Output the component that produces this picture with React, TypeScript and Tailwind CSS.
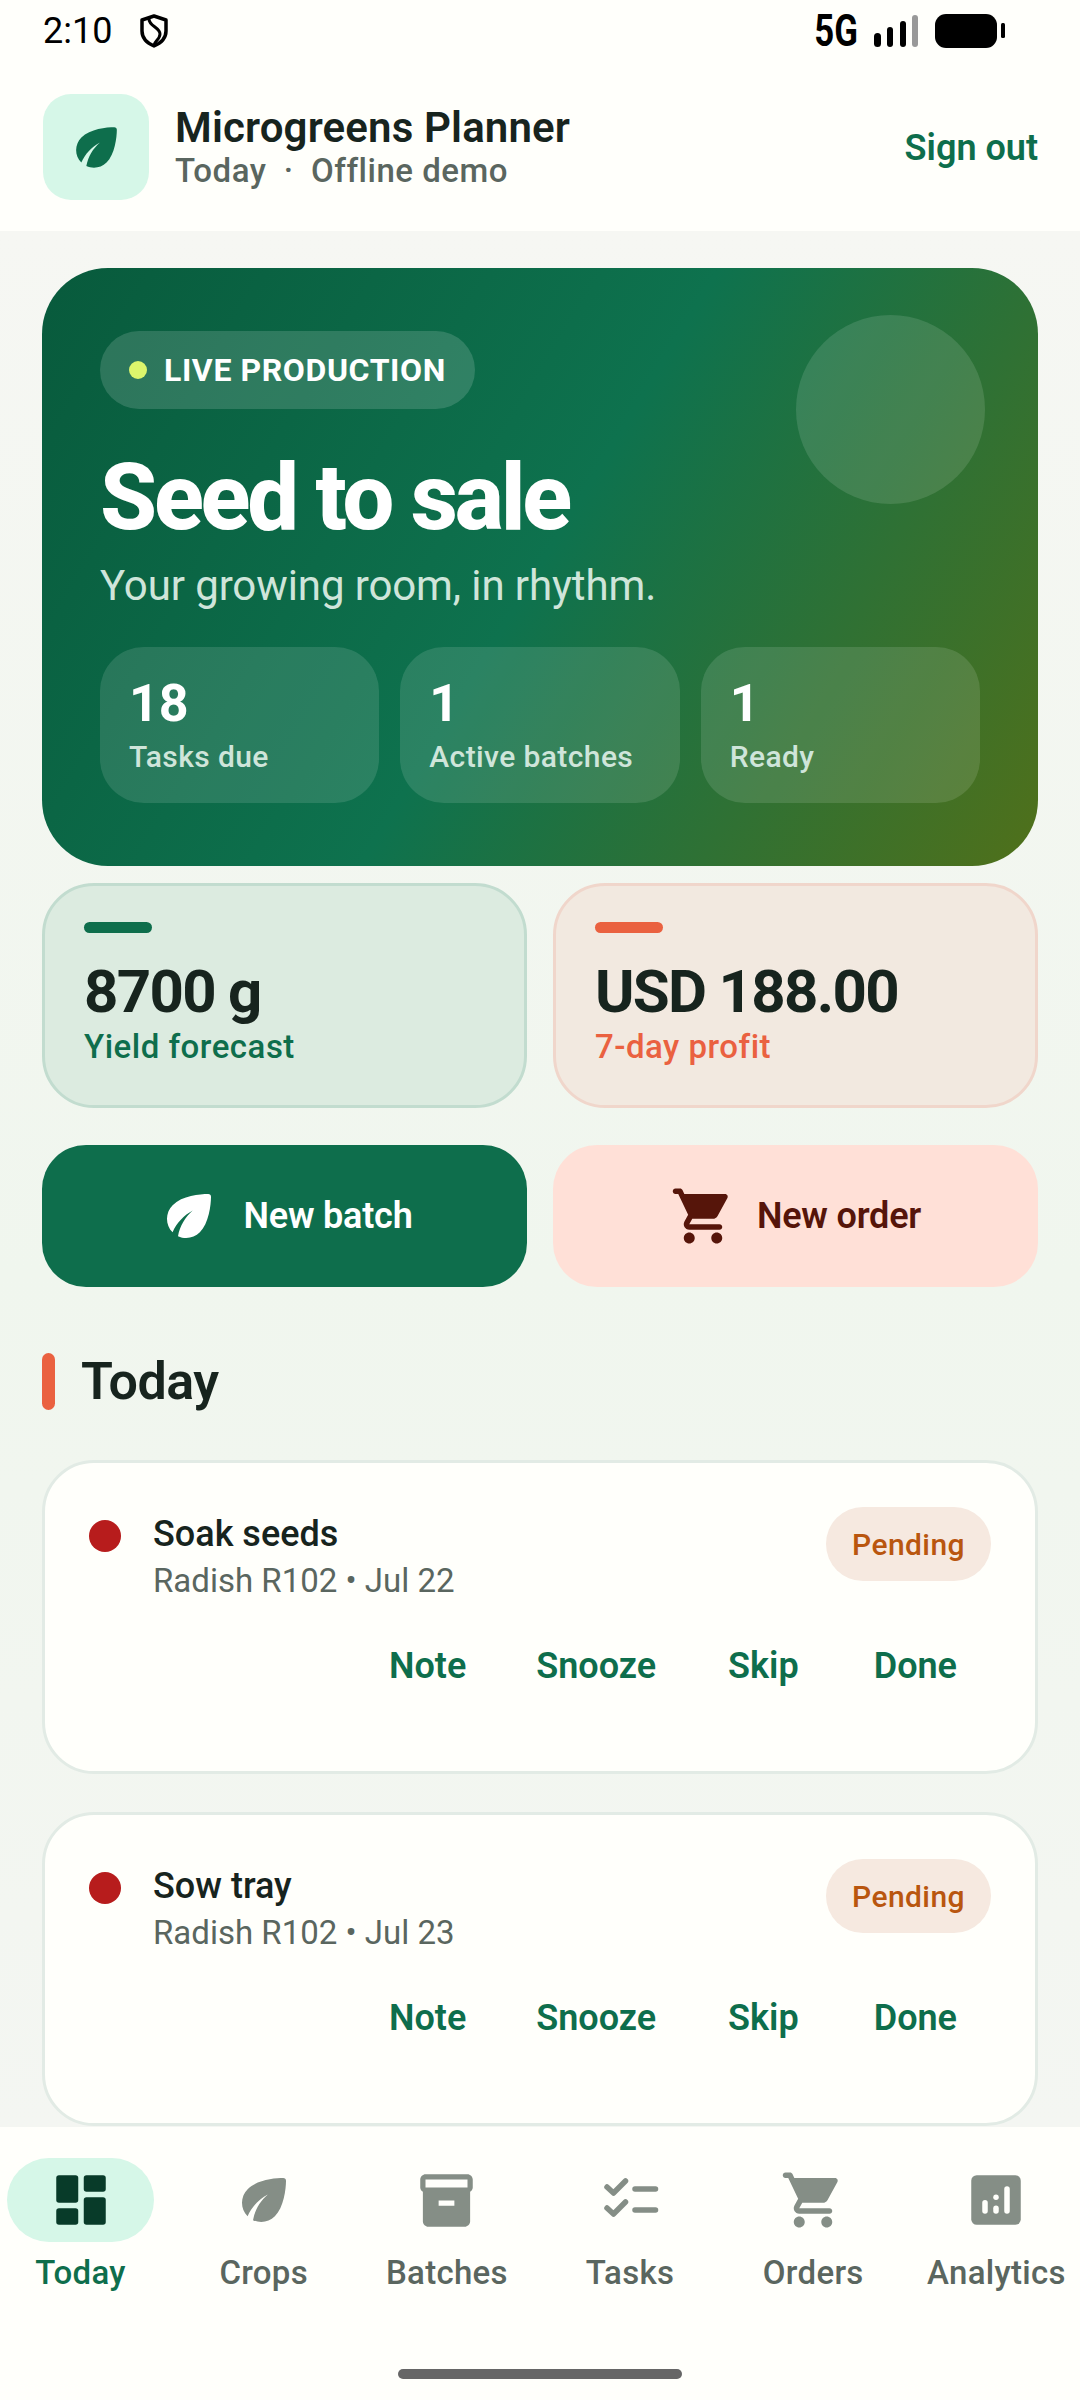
import React from "react";
import { MdInventory2 } from "react-icons/md";

const tasks = [
  { title: "Soak seeds", sub: "Radish R102 • Jul 22" },
  { title: "Sow tray", sub: "Radish R102 • Jul 23" },
];

type IconProps = { size?: number; className?: string };

function LeafIcon({ size = 66, className }: IconProps) {
  return (
    <svg className={className} width={size} height={size} viewBox="0 0 24 24" fill="currentColor">
      <path d="M6.050 8.050c-2.730 2.730-2.730 7.150-.02 9.880 1.470-3.400 4.090-6.240 7.360-7.930-2.770 2.340-4.710 5.610-5.390 9.320 2.600 1.230 5.800.78 7.950-1.370C19.200 14.700 20 8 20 5c0-.6-.4-1-1-1C16 4 9.530 4.570 6.050 8.050z" />
    </svg>
  );
}

function CartIcon({ size = 66, className }: IconProps) {
  return (
    <svg className={className} width={size} height={size} viewBox="0 0 24 24" fill="currentColor">
      <path d="M7 18c-1.100 0-1.990.9-1.990 2S5.900 22 7 22s2-.9 2-2-.9-2-2-2zM1 3c0 .55.45 1 1 1h1l3.600 7.590-1.350 2.440C4.520 15.370 5.480 17 7 17h11c.55 0 1-.45 1-1s-.45-1-1-1H7l1.100-2h7.450c.75 0 1.410-.41 1.750-1.030l3.580-6.490c.37-.66-.11-1.480-.87-1.480H5.210l-.67-1.430c-.16-.35-.52-.57-.9-.57H2c-.55 0-1 .45-1 1zm16 15c-1.100 0-1.990.9-1.990 2s.89 2 1.990 2 2-.9 2-2-.9-2-2-2z" />
    </svg>
  );
}

function DashboardIcon({ size = 66, className }: IconProps) {
  return (
    <svg className={className} width={size} height={size} viewBox="0 0 24 24" fill="currentColor">
      <rect x="3" y="3" width="8" height="10" rx="1" />
      <rect x="3" y="15" width="8" height="6" rx="1" />
      <rect x="13" y="3" width="8" height="6" rx="1" />
      <rect x="13" y="11" width="8" height="10" rx="1" />
    </svg>
  );
}

function BatchesIcon({ className }: IconProps) {
  return <MdInventory2 className={className} size={63} />;
}

function TasksIcon({ size = 66, className }: IconProps) {
  return (
    <svg className={className} width={size} height={size} viewBox="0 0 66 66" fill="none" stroke="currentColor" strokeWidth="5.500" strokeLinecap="round" strokeLinejoin="round">
      <path d="M10 20 L16.500 26 L28.500 14" />
      <path d="M10 41 L16.500 47 L28.500 35" />
      <path d="M38 22 H58.500" />
      <path d="M38 43 H58.500" />
    </svg>
  );
}

function AnalyticsIcon({ size = 66, className }: IconProps) {
  return (
    <svg className={className} width={size} height={size} viewBox="0 0 24 24" fill="currentColor">
      <rect x="3" y="3" width="18" height="18" rx="2" />
      <g fill="#fffffb">
        <rect x="7" y="12" width="2" height="5" rx="1" />
        <rect x="11" y="14" width="2" height="3" rx="1" />
        <rect x="11" y="10" width="2" height="2" rx="1" />
        <rect x="15" y="7" width="2" height="10" rx="1" />
      </g>
    </svg>
  );
}

const navItems = [
  { label: "Today", Icon: DashboardIcon },
  { label: "Crops", Icon: LeafIcon },
  { label: "Batches", Icon: BatchesIcon },
  { label: "Tasks", Icon: TasksIcon },
  { label: "Orders", Icon: CartIcon },
  { label: "Analytics", Icon: AnalyticsIcon },
];

function StatusBar() {
  return (
    <div className="flex h-[62px] items-center justify-between pl-[43px] pr-[75px] text-black">
      <div className="flex items-center gap-[28px]">
        <span className="text-[36px] leading-none">2:10</span>
        <svg width="28" height="34" viewBox="0 0 28 34" fill="none" stroke="#000" strokeWidth="3.500">
          <path d="M14 2 L26 6 V17 C26 24 21 29 14 32 C7 29 2 24 2 17 V6 Z" strokeLinejoin="round" />
          <path d="M9 4 C8 12 20 13 20 20 C20 25 15 27 14 31" strokeWidth="3" />
        </svg>
      </div>
      <div className="flex items-center">
        <span className="w-[57px] origin-right scale-x-[0.79] whitespace-nowrap text-right text-[44px] font-bold leading-none">5G</span>
        <svg className="ml-[16px]" width="44" height="32" viewBox="0 0 44 32" fill="#000">
          <rect x="0" y="18" width="7" height="14" rx="3.500" />
          <rect x="13" y="12" width="6" height="20" rx="3" />
          <rect x="26" y="6" width="6" height="26" rx="3" />
          <rect x="38" y="0" width="6" height="32" rx="3" fill="#999" />
        </svg>
        <svg className="ml-[17px]" width="70" height="34" viewBox="0 0 70 34" fill="#000">
          <rect x="0" y="0" width="62" height="34" rx="11" />
          <rect x="66" y="9" width="4" height="15" rx="1.500" />
        </svg>
      </div>
    </div>
  );
}

function Header() {
  return (
    <div className="flex h-[169px] items-start justify-between pl-[43px] pr-[42px] pt-[32px]">
      <div className="flex items-center gap-[26px]">
        <div className="flex h-[106px] w-[106px] items-center justify-center rounded-[28px] bg-[#d6f7e8]">
          <LeafIcon className="text-[#0e6e4c]" size={61} />
        </div>
        <div>
          <div className="text-[42px] font-semibold leading-[48px] tracking-[0.15px] text-[#17241e]">Microgreens Planner</div>
          <div className="text-[33px] font-medium leading-[38px] tracking-[0.5px] text-[#5a665f]">Today&nbsp; ·&nbsp; Offline demo</div>
        </div>
      </div>
      <span className="mt-[33px] text-[36px] font-semibold leading-[42px] text-[#0e6e4c]">Sign out</span>
    </div>
  );
}

function Hero() {
  return (
    <div className="relative h-[598px] overflow-hidden rounded-[66px] bg-[linear-gradient(121deg,#085a3c_0%,#0e724e_50%,#50701a_100%)] px-[58px] pt-[63px]">
      <div className="absolute right-[53px] top-[47px] h-[189px] w-[189px] rounded-full bg-white/12" />
      <div className="inline-flex h-[78px] items-center rounded-full bg-white/15 pl-[29px] pr-[29px]">
        <span className="h-[18px] w-[18px] rounded-full bg-[#dcf56c]" />
        <span className="ml-[17px] text-[32px] font-bold leading-none tracking-[0.6px] text-white">LIVE PRODUCTION</span>
      </div>
      <div className="mt-[39px] text-[92px] font-extrabold leading-[100px] tracking-[-3.200px] text-white">Seed to sale</div>
      <div className="mt-[13px] text-[42px] leading-[50px] tracking-[-0.1px] text-[#cfe5da]">Your growing room, in rhythm.</div>
      <div className="mt-[36px] flex w-[880px] gap-[21px]">
        {[
          ["18", "Tasks due"],
          ["1", "Active batches"],
          ["1", "Ready"],
        ].map(([value, label]) => (
          <div key={label} className="h-[156px] flex-1 rounded-[44px] bg-white/12 pl-[29px] pt-[27px]">
            <div className="text-[52px] font-bold leading-[60px] text-white">{value}</div>
            <div className="mt-[5px] text-[30px] font-medium leading-[36px] tracking-[0.4px] text-[#cfe5da]">{label}</div>
          </div>
        ))}
      </div>
    </div>
  );
}

function Metrics() {
  return (
    <div className="mt-[17px] flex gap-[26px]">
      <div className="h-[225px] flex-1 rounded-[52px] border-[3px] border-[#c2dccf] bg-[#dcebe0] pl-[39px] pt-[36px]">
        <div className="h-[11px] w-[68px] rounded-full bg-[#0e6e4c]" />
        <div className="mt-[23px] text-[60px] font-bold leading-[72px] tracking-[-1.700px] text-[#17241e]">8700 g</div>
        <div className="mt-[-1px] text-[33px] font-medium leading-[40px] tracking-[0.5px] text-[#0e6e4c]">Yield forecast</div>
      </div>
      <div className="h-[225px] flex-1 rounded-[52px] border-[3px] border-[#f0d6cb] bg-[#f2e9e0] pl-[39px] pt-[36px]">
        <div className="h-[11px] w-[68px] rounded-full bg-[#ea6140]" />
        <div className="mt-[23px] text-[60px] font-bold leading-[72px] tracking-[-1.700px] text-[#17241e]">USD 188.00</div>
        <div className="mt-[-1px] text-[33px] font-medium leading-[40px] tracking-[0.5px] text-[#ea6140]">7-day profit</div>
      </div>
    </div>
  );
}

function Actions() {
  return (
    <div className="mt-[37px] flex gap-[26px]">
      <button className="flex h-[142px] flex-1 items-center justify-center gap-[21px] rounded-[44px] bg-[#0e6e4c] text-[36px] font-semibold tracking-[-0.2px] text-white">
        <LeafIcon size={66} />
        New batch
      </button>
      <button className="flex h-[142px] flex-1 items-center justify-center gap-[21px] rounded-[44px] bg-[#ffe0d7] text-[36px] font-semibold tracking-[-0.2px] text-[#56150a]">
        <CartIcon size={66} />
        New order
      </button>
    </div>
  );
}

function TaskCard({ title, sub }: { title: string; sub: string }) {
  return (
    <div className="h-[314px] rounded-[52px] border-[3px] border-[#e2ebe5] bg-[#fffffb] pl-[44px] pr-[44px] pt-[44px]">
      <div className="flex items-start">
        <span className="mt-[13px] h-[32px] w-[32px] rounded-full bg-[#b71c1c]" />
        <div className="ml-[32px] mt-[5px] flex-1">
          <div className="text-[36px] font-medium leading-[44px] text-[#17241e]">{title}</div>
          <div className="mt-[2px] text-[33px] leading-[46px] text-[#5a665f]">{sub}</div>
        </div>
        <span className="flex h-[74px] w-[165px] items-center justify-center rounded-full bg-[#f6e9e0] text-[30px] font-medium tracking-[0.4px] text-[#b9560f]">Pending</span>
      </div>
      <div className="mt-[40px] flex justify-end pr-[34px] text-[36px] font-semibold leading-[44px] text-[#0e6e4c]">
        <span>Note</span>
        <span className="ml-[70px]">Snooze</span>
        <span className="ml-[72px]">Skip</span>
        <span className="ml-[75px]">Done</span>
      </div>
    </div>
  );
}

function BottomNav() {
  return (
    <div className="h-[273px] bg-[#fffffb]">
      <div className="flex gap-[36.200px] pl-[7px] pt-[31px]">
        {navItems.map(({ label, Icon }, i) => (
          <div key={label} className="flex w-[147px] flex-col items-center">
            <div className={`flex h-[84px] w-[147px] items-center justify-center rounded-full ${i === 0 ? "bg-[#d6f7e8] text-[#083b29]" : "text-[#858e86]"}`}>
              <Icon />
            </div>
            <span className={`mt-[11px] whitespace-nowrap text-[33px] font-medium leading-[40px] tracking-[0.3px] ${i === 0 ? "text-[#0e6e4c]" : "text-[#5a665f]"}`}>{label}</span>
          </div>
        ))}
      </div>
      <div className="mx-auto mt-[76px] h-[10px] w-[284px] rounded-full bg-[#666666]" />
    </div>
  );
}

export default function App() {
  return (
    <div className="flex h-[2400px] w-[1080px] flex-col overflow-hidden bg-[#fffffb] font-['Roboto',sans-serif]">
      <StatusBar />
      <Header />
      <div className="flex-1 overflow-hidden bg-[linear-gradient(180deg,#f6f7f3_0%,#f0f6ee_55%,#f4f6f2_100%)] px-[42px] pt-[37px]">
        <Hero />
        <Metrics />
        <Actions />
        <div className="mt-[66px] flex h-[57px] items-center">
          <span className="h-[57px] w-[13px] rounded-full bg-[#ea6140]" />
          <span className="ml-[26px] text-[52px] font-semibold leading-[60px] tracking-[-0.5px] text-[#17241e]">Today</span>
        </div>
        <div className="mt-[50px] flex flex-col gap-[38px]">
          {tasks.map((t) => (
            <TaskCard key={t.title} title={t.title} sub={t.sub} />
          ))}
        </div>
      </div>
      <BottomNav />
    </div>
  );
}
